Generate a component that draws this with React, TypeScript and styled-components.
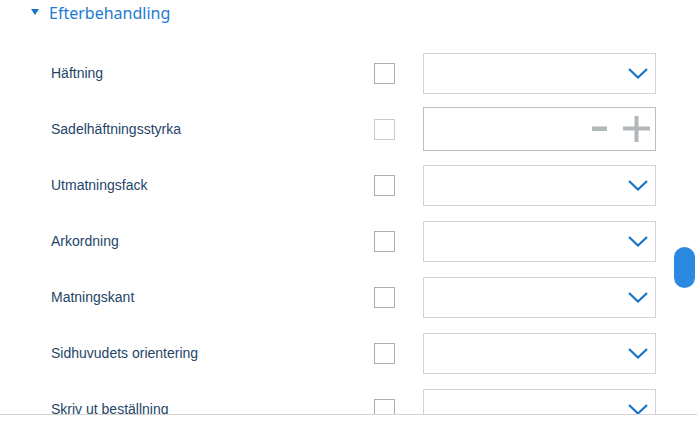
import React from "react";
import styled, { createGlobalStyle } from "styled-components";

const Global = createGlobalStyle`
  html, body { margin: 0; padding: 0; background: #fff; }
  body { font-family: "Liberation Sans", Arial, sans-serif; }
`;

const Page = styled.div`
  width: 697px;
  height: 426px;
  position: relative;
  overflow: hidden;
  background: #fff;
`;

const Content = styled.div`
  height: 415px;
  overflow: hidden;
  border-bottom: 1px solid #d4d4d4;
  box-sizing: border-box;
`;

const Header = styled.div`
  display: flex;
  align-items: center;
  height: 26px;
  padding-left: 31px;
  gap: 10px;
`;

const Caret = styled.span`
  width: 0;
  height: 0;
  border-left: 4px solid transparent;
  border-right: 4px solid transparent;
  border-top: 6px solid #1a73c8;
  margin-top: -2px;
`;

const Title = styled.span`
  font-family: "Noto Sans", "Open Sans", sans-serif;
  font-size: 16px;
  color: #1e7bd3;
  margin-top: -1px;
`;

const Rows = styled.div`
  padding-top: 19px;
  padding-left: 49px;
`;

const Row = styled.div`
  display: flex;
  align-items: center;
  height: 56px;
`;

const Label = styled.div`
  width: 325px;
  box-sizing: border-box;
  padding-left: 2px;
  font-size: 14px;
  color: #244568;
`;

const Check = styled.div<{ $disabled?: boolean }>`
  width: 21px;
  height: 21px;
  box-sizing: border-box;
  border: 1px solid ${(p) => (p.$disabled ? "#c9cccc" : "#a8b0b0")};
  margin-right: 28px;
`;

const Field = styled.div<{ $spin?: boolean }>`
  width: 233px;
  height: ${(p) => (p.$spin ? 44 : 41)}px;
  box-sizing: border-box;
  border: 1px solid ${(p) => (p.$spin ? "#bfbfbf" : "#d3d3d3")};
  display: flex;
  align-items: center;
  justify-content: flex-end;
  padding-right: ${(p) => (p.$spin ? 5 : 7)}px;
  gap: 16px;
`;

const Thumb = styled.div`
  position: absolute;
  left: 674px;
  top: 247px;
  width: 21px;
  height: 41px;
  border-radius: 11px;
  background: #2b8ae0;
`;

const Chevron = () => (
  <svg width="20" height="11" viewBox="0 0 20 11">
    <path d="M1 1 L10 9.5 L19 1" fill="none" stroke="#1a73c8" strokeWidth="2.2" />
  </svg>
);

const Minus = () => (
  <svg width="15" height="26" viewBox="0 0 15 26">
    <rect x="0" y="10.5" width="15" height="4.5" fill="#b2b7b9" />
  </svg>
);

const Plus = () => (
  <svg width="27" height="26" viewBox="0 0 27 26">
    <rect x="0" y="10.5" width="27" height="4" fill="#b2b7b9" />
    <rect x="11.5" y="0" width="4" height="26" fill="#b2b7b9" />
  </svg>
);

const rows: { label: string; spin?: boolean }[] = [
  { label: "Häftning" },
  { label: "Sadelhäftningsstyrka", spin: true },
  { label: "Utmatningsfack" },
  { label: "Arkordning" },
  { label: "Matningskant" },
  { label: "Sidhuvudets orientering" },
  { label: "Skriv ut beställning" },
];

export default function App() {
  return (
    <Page>
      <Global />
      <Content>
        <Header>
          <Caret />
          <Title>Efterbehandling</Title>
        </Header>
        <Rows>
          {rows.map((r) => (
            <Row key={r.label}>
              <Label>{r.label}</Label>
              <Check $disabled={r.spin} />
              <Field $spin={r.spin}>
                {r.spin ? (
                  <>
                    <Minus />
                    <Plus />
                  </>
                ) : (
                  <Chevron />
                )}
              </Field>
            </Row>
          ))}
        </Rows>
      </Content>
      <Thumb />
    </Page>
  );
}
